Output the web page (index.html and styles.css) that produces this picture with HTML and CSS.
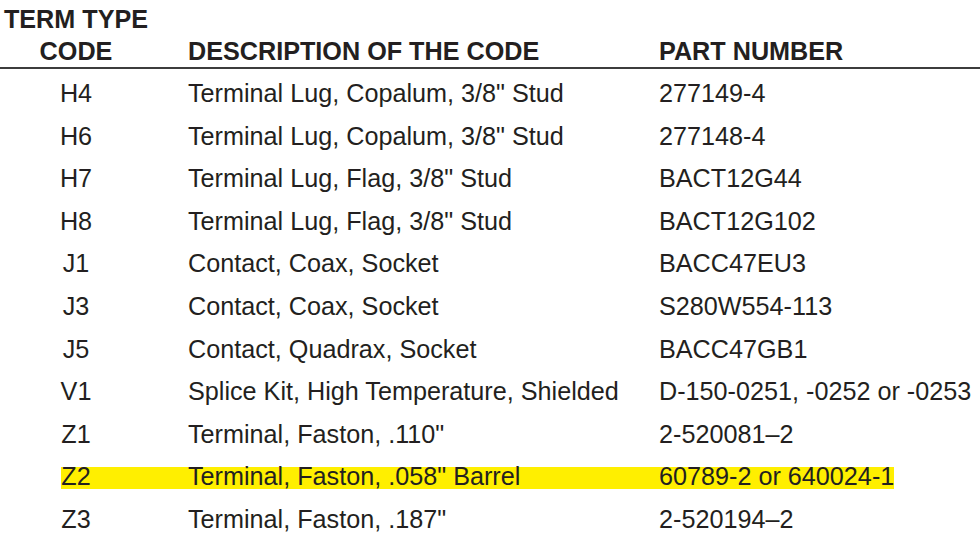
FILE: index.html
```html
<!DOCTYPE html>
<html>
<head>
<meta charset="utf-8">
<link rel="stylesheet" href="styles.css">
</head>
<body>
<div class="table">
  <div class="row head">
    <div class="code">TERM TYPE<br>CODE</div>
    <div class="desc">DESCRIPTION OF THE CODE</div>
    <div class="part">PART NUMBER</div>
  </div>
  <div class="body">
    <div class="row"><div class="code">H4</div><div class="desc">Terminal Lug, Copalum, 3/8" Stud</div><div class="part">277149-4</div></div>
    <div class="row"><div class="code">H6</div><div class="desc">Terminal Lug, Copalum, 3/8" Stud</div><div class="part">277148-4</div></div>
    <div class="row"><div class="code">H7</div><div class="desc">Terminal Lug, Flag, 3/8" Stud</div><div class="part">BACT12G44</div></div>
    <div class="row"><div class="code">H8</div><div class="desc">Terminal Lug, Flag, 3/8" Stud</div><div class="part">BACT12G102</div></div>
    <div class="row"><div class="code">J1</div><div class="desc">Contact, Coax, Socket</div><div class="part">BACC47EU3</div></div>
    <div class="row"><div class="code">J3</div><div class="desc">Contact, Coax, Socket</div><div class="part">S280W554-113</div></div>
    <div class="row"><div class="code">J5</div><div class="desc">Contact, Quadrax, Socket</div><div class="part">BACC47GB1</div></div>
    <div class="row"><div class="code">V1</div><div class="desc">Splice Kit, High Temperature, Shielded</div><div class="part">D-150-0251, -0252 or -0253</div></div>
    <div class="row"><div class="code">Z1</div><div class="desc">Terminal, Faston, .110"</div><div class="part">2-520081–2</div></div>
    <div class="row highlight"><div class="code">Z2</div><div class="desc">Terminal, Faston, .058" Barrel</div><div class="part">60789-2 or 640024-1</div></div>
    <div class="row"><div class="code">Z3</div><div class="desc">Terminal, Faston, .187"</div><div class="part">2-520194–2</div></div>
  </div>
</div>
</body>
</html>
```

FILE: styles.css
```css
html, body {
  margin: 0;
  padding: 0;
  background: #ffffff;
}

body {
  font-family: "Liberation Sans", Arial, sans-serif;
  color: #231f20;
  width: 980px;
  height: 535px;
  overflow: hidden;
}

.row {
  display: grid;
  grid-template-columns: 152px 435px 1fr;
  column-gap: 36px;
  font-size: 25.2px;
  white-space: nowrap;
}

.code {
  text-align: center;
}

.head {
  font-weight: bold;
  font-size: 25.2px;
  line-height: 32px;
  padding-top: 2.5px;
  border-bottom: 2px solid #3c3c3c;
  align-items: end;
}

.body {
  padding-top: 3.5px;
}

.body .row {
  height: 42.6px;
  line-height: 42.6px;
}

.highlight {
  background: linear-gradient(#ffef00, #ffef00) 61px 12px / 833px 22px no-repeat;
}
```
